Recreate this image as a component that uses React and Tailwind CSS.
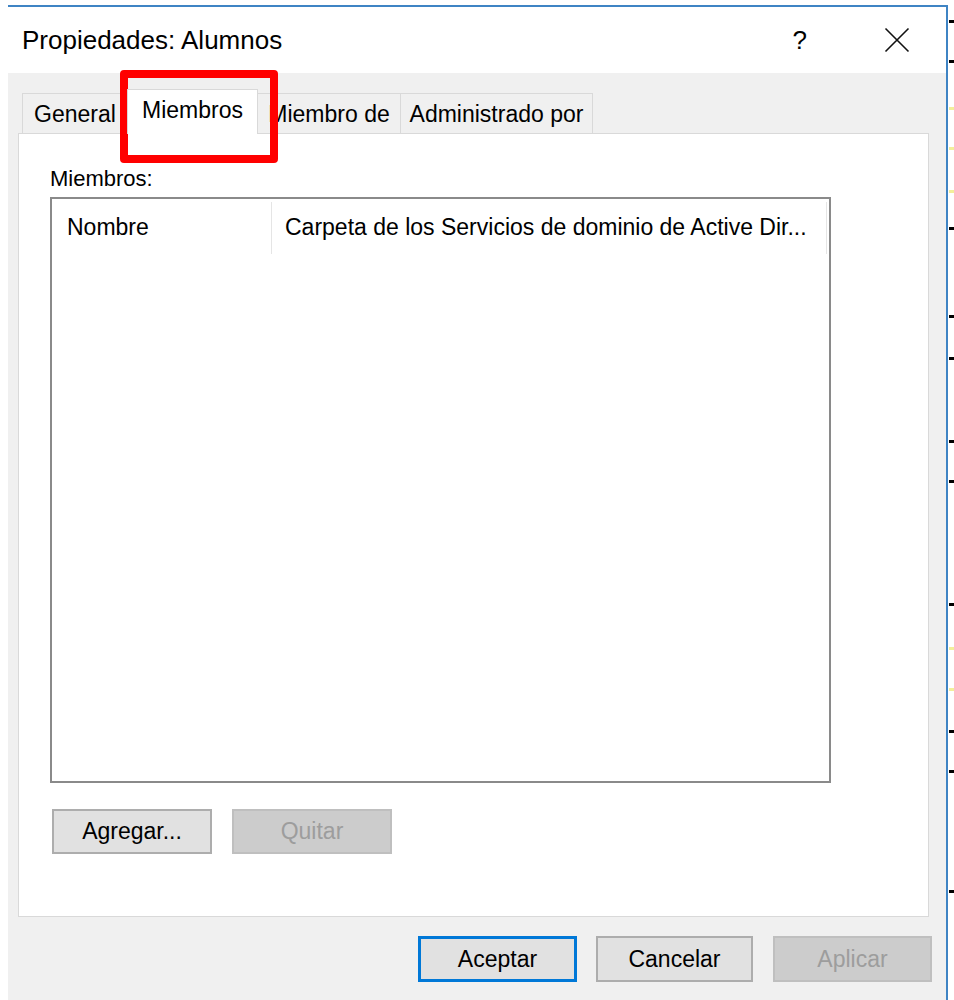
import React from "react";

const marks = [
  { top: 20, c: "bg-black" },
  { top: 60, c: "bg-black" },
  { top: 107, c: "bg-[#f3ef9a]" },
  { top: 147, c: "bg-[#f3ef9a]" },
  { top: 190, c: "bg-[#f3ef9a]" },
  { top: 227, c: "bg-black" },
  { top: 315, c: "bg-black" },
  { top: 357, c: "bg-black" },
  { top: 440, c: "bg-black" },
  { top: 480, c: "bg-black" },
  { top: 603, c: "bg-black" },
  { top: 647, c: "bg-[#f3ef9a]" },
  { top: 688, c: "bg-[#f3ef9a]" },
  { top: 730, c: "bg-black" },
  { top: 770, c: "bg-black" },
  { top: 890, c: "bg-black" },
];

function Tab({ label, width, selected }) {
  if (selected) {
    return (
      <div
        className={`relative z-10 -mb-px -ml-px flex h-[45px] items-start justify-center border border-b-0 border-[#d9d9d9] bg-white pt-[6px] ${width}`}
      >
        <span className="leading-[28px]">{label}</span>
      </div>
    );
  }
  return (
    <div
      className={`-ml-px flex h-[40px] items-center justify-center border border-b-0 border-[#d9d9d9] bg-[#f0f0f0] first:ml-0 ${width}`}
    >
      <span className="leading-[28px]">{label}</span>
    </div>
  );
}

export default function App() {
  return (
    <div className="relative flex h-[1000px] w-[954px] overflow-hidden bg-white pt-[5px] font-['Liberation_Sans',Arial,sans-serif] text-[23px] text-black">
      <div className="w-[8px] shrink-0" />
      {/* Window */}
      <div className="flex w-[940px] shrink-0 flex-col border-t-2 border-r-2 border-[#3f84c4]">
        {/* Title bar */}
        <div className="flex h-[66px] shrink-0 items-center bg-white pl-[14px] pr-[36px]">
          <span className="flex-1 text-[26px] leading-[30px]">Propiedades: Alumnos</span>
          <span className="text-[26px] leading-[30px]">?</span>
          <svg
            className="ml-[77px]"
            width="26"
            height="26"
            viewBox="0 0 26 26"
            fill="none"
            stroke="#111"
            strokeWidth="1.6"
          >
            <path d="M1.5 1.5 L24.5 24.5 M24.5 1.5 L1.5 24.5" />
          </svg>
        </div>

        {/* Body */}
        <div className="flex flex-1 flex-col bg-[#f0f0f0]">
          {/* Tab strip */}
          <div className="flex h-[60px] items-end pl-[14px]">
            <Tab label="General" width="w-[106px]" />
            <Tab label="Miembros" width="w-[131px]" selected />
            <Tab label="Miembro de" width="w-[144px]" />
            <Tab label="Administrado por" width="w-[193px]" />
          </div>

          {/* Panel */}
          <div className="ml-[10px] flex h-[784px] w-[911px] flex-col border border-[#d9d9d9] bg-white pl-[31px]">
            <div className="mt-[32px] text-[22px] leading-[26px]">Miembros:</div>
            <div className="mt-[5px] flex h-[586px] w-[781px] flex-col border-2 border-[#8a8a8a] bg-white">
              <div className="flex h-[56px] items-start">
                <div className="flex h-[56px] w-[219px] items-center pl-[15px]">Nombre</div>
                <div className="mt-[3px] h-[52px] w-px bg-[#e5e5e5]" />
                <div className="flex h-[56px] flex-1 items-center whitespace-nowrap pl-[13px]">
                  Carpeta de los Servicios de dominio de Active Dir...
                </div>
                <div className="mt-[3px] mr-[2px] h-[52px] w-px bg-[#e5e5e5]" />
              </div>
            </div>
            <div className="ml-[2px] mt-[26px] flex gap-[20px]">
              <div className="flex h-[45px] w-[160px] items-center justify-center border-2 border-[#adadad] bg-[#e1e1e1]">
                Agregar...
              </div>
              <div className="flex h-[45px] w-[160px] items-center justify-center border-2 border-[#bfbfbf] bg-[#cccccc] text-[#9d9d9d]">
                Quitar
              </div>
            </div>
          </div>

          {/* Dialog buttons */}
          <div className="mt-[19px] flex justify-end pr-[14px]">
            <div className="flex h-[46px] w-[159px] items-center justify-center border-[3px] border-[#0078d7] bg-[#e1e1e1]">
              Aceptar
            </div>
            <div className="ml-[19px] flex h-[46px] w-[157px] items-center justify-center border-2 border-[#adadad] bg-[#e1e1e1]">
              Cancelar
            </div>
            <div className="ml-[20px] flex h-[46px] w-[159px] items-center justify-center border-2 border-[#bfbfbf] bg-[#cccccc] text-[#9d9d9d]">
              Aplicar
            </div>
          </div>
        </div>
      </div>

      {/* Background window fragments on the right edge */}
      <div className="relative w-[6px] shrink-0">
        {marks.map((m, i) => (
          <div
            key={i}
            className={`absolute left-[1px] h-[3px] w-[5px] ${m.c}`}
            style={{ top: m.top - 5 }}
          />
        ))}
      </div>

      {/* Red highlight annotation */}
      <div className="pointer-events-none absolute left-[120px] top-[70px] h-[93px] w-[158px] rounded-[4px] border-[8px] border-[#ff0000]" />
    </div>
  );
}
